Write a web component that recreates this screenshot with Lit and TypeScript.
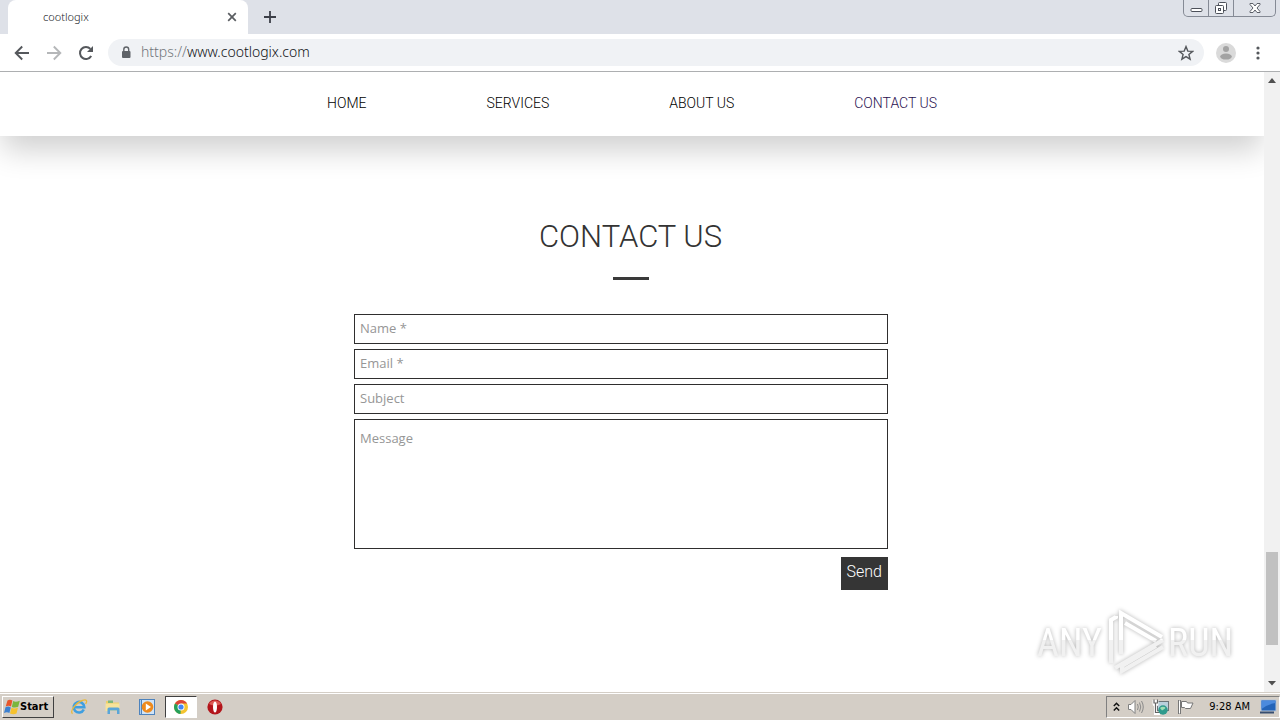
import { LitElement, html, css, svg } from "lit";
import { customElement } from "lit/decorators.js";

const icon = (w: number, h: number, body: unknown) =>
  html`<svg width=${w} height=${h} viewBox="0 0 ${w} ${h}" aria-hidden="true">${body}</svg>`;

const ICONS = {
  close: icon(10, 10, svg`<path d="M1.2 1.2 8.8 8.8M8.8 1.2 1.2 8.8" stroke="#5a5d61" stroke-width="1.7"/>`),
  plus: icon(12, 12, svg`<path d="M6 0V12M0 6H12" stroke="#3c3f48" stroke-width="1.8"/>`),
  back: icon(16, 16, svg`<path d="M15 8H2M8.2 1.5 1.7 8l6.5 6.5" fill="none" stroke="#55585c" stroke-width="1.9"/>`),
  forward: icon(16, 16, svg`<path d="M1 8H14M7.8 1.5 14.3 8l-6.5 6.5" fill="none" stroke="#b5b7b9" stroke-width="1.9"/>`),
  reload: icon(16, 16, svg`<path d="M13.2 11A6 6 0 1 1 12.4 3.9" fill="none" stroke="#55585c" stroke-width="2"/><path d="M15 1V7H9Z" fill="#55585c"/>`),
  lock: icon(10, 13, svg`<rect x="1" y="5" width="8.5" height="7" rx="1" fill="#5f6368"/><path d="M2.8 5.5V3.5a2.4 2.4 0 0 1 4.9 0v2" fill="none" stroke="#5f6368" stroke-width="1.4"/>`),
  star: icon(16, 16, svg`<path d="M8 1.6 9.8 6.1 14.6 6.4 10.9 9.5 12.1 14.2 8 11.6 3.9 14.2 5.1 9.5 1.4 6.4 6.2 6.1Z" fill="none" stroke="#55585c" stroke-width="1.4"/>`),
  person: icon(20, 20, svg`<circle cx="10" cy="10" r="10" fill="#dadada"/><circle cx="10" cy="6" r="3" fill="#a3a3a3"/><ellipse cx="10" cy="13.6" rx="5.8" ry="3" fill="#a3a3a3"/>`),
  dots: icon(4, 14, svg`<g fill="#55585c"><circle cx="2" cy="2" r="1.6"/><circle cx="2" cy="7" r="1.6"/><circle cx="2" cy="12" r="1.6"/></g>`),
  minimize: icon(13, 6, svg`<rect x="1" y="1.5" width="11" height="3" rx="1" fill="#fff" stroke="#4c5059"/>`),
  restore: icon(14, 14, svg`<g fill="#fff" stroke="#4c5059"><rect x="4.5" y="1.5" width="8" height="8" rx="1"/><rect x="1.5" y="4.5" width="8" height="8" rx="1"/><rect x="4.5" y="7.5" width="2" height="2"/></g>`),
  windowClose: icon(12, 12, svg`<path d="M1 1.5H4L6 4 8 1.5H11V2.5L8 6l3 3.5v1H8L6 8 4 10.5H1v-1L4 6 1 2.5Z" fill="#fff" stroke="#5b5f68"/>`),
  up: icon(8, 5, svg`<path d="M0 5 4 0 8 5Z" fill="#505050"/>`),
  down: icon(8, 5, svg`<path d="M0 0H8L4 4.5Z" fill="#505050"/>`),
  windows: icon(16, 16, svg`<path d="M3.5 1.5Q5.8 0 8.4 1.5L7 7.5Q4.5 6 1.7 7.5Z" fill="#e8562a"/><path d="M9.2 2Q11.5 3.5 15.8 1.7L14.2 7.8Q11 9.2 7.8 7.9Z" fill="#7ab63c"/><path d="M1.5 8.3Q4.2 6.9 6.8 8.4L5.4 14Q3 12.5 0 14Z" fill="#3c80d0"/><path d="M7.5 8.8Q10.5 10.2 14 8.6L12.5 14.4Q9.5 16 6 14.4Z" fill="#f6c22e"/>`),
  ie: icon(18, 18, svg`<path d="M13.8 11.5A5.3 5.3 0 1 1 14.3 9.2H5" fill="none" stroke="#3f9fe0" stroke-width="2.6"/><path d="M2.5 15.8C-.5 13 6 4.5 12.5 2.3 17 1 17.5 3 15.6 6" fill="none" stroke="#e9b93c" stroke-width="1.3"/>`),
  folder: icon(18, 18, svg`<path d="M2 3H7L8.5 4.5H15V13H2Z" fill="#edcf6b"/><path d="M4 2.5H9V5H4Z" fill="#7fb77a"/><path d="M1.5 5.5H15.5V13H1.5Z" fill="#f7e39b"/><path d="M3.5 16V11Q3.5 9.5 5 9.5H14Q15.5 9.5 15.5 11V16H13V12.5H6V16Z" fill="#5ba6d8"/>`),
  player: icon(18, 18, svg`<rect x="1.5" y="1.5" width="12" height="15" fill="#a9cdf0" stroke="#4d83bd"/><rect x="3.5" y="1.5" width="13" height="15" fill="#cfe3f7" stroke="#4d83bd"/><circle cx="9.5" cy="9" r="5.8" fill="#ee8a1d"/><path d="M7.8 5.5 13 9 7.8 12.5Z" fill="#fff"/>`),
  chrome: icon(16, 16, svg`<circle cx="8" cy="8" r="7" fill="#f4c430"/><path d="M8 8 1.94 4.5A7 7 0 0 1 14.06 4.5Z" fill="#dc4437"/><path d="M8 8 1.94 4.5A7 7 0 0 0 7.5 15Z" fill="#26a05b"/><path d="M8 4.5H14.06L11 9.7Z" fill="#f4c430"/><circle cx="8" cy="8" r="3.5" fill="#fff"/><circle cx="8" cy="8" r="2.6" fill="#4285f4"/>`),
  opera: icon(16, 16, svg`<circle cx="8" cy="8" r="7.6" fill="#b3151b"/><path d="M2 5A7 7 0 0 1 14 5Q8 8 2 5Z" fill="#dd5a55"/><ellipse cx="8" cy="8" rx="2" ry="5.5" fill="#fff"/>`),
  chevrons: icon(7, 10, svg`<path d="M.8 4 3.5 1.3 6.2 4M.8 8.5 3.5 5.8 6.2 8.5" fill="none" stroke="#111" stroke-width="1.5"/>`),
  speaker: icon(18, 16, svg`<path d="M1.5 5.5H4L8 1.5V14.5L4 10.5H1.5Z" fill="#fff" stroke="#808080"/><path d="M10.5 5Q12 8 10.5 11M12.5 3.5Q15 8 12.5 12.5M14.5 2Q18 8 14.5 14" fill="none" stroke="#8a8a8a"/>`),
  network: icon(18, 18, svg`<rect x="5.5" y="3.5" width="11" height="9" fill="#b9d0dc" stroke="#6c7478"/><path d="M2 2V5Q2 7 3.5 7T5 5V2M3.5 7V15.5H8" fill="none" stroke="#fff" stroke-width="3"/><path d="M2 1.5V5H5.5V1.5M3.5 5V14.5H8" fill="none" stroke="#666" stroke-width="1.2"/><circle cx="11" cy="12" r="4.7" fill="#2f9b8d"/><path d="M8 10Q10 8 12.5 9T10 12.5Z" fill="#9fddb2"/>`),
  flag: icon(18, 16, svg`<path d="M2.5 1V15" stroke="#777" stroke-width="3"/><path d="M2.5 1.5V14.5" stroke="#fff"/><path d="M4.5 2.5H9.5L10.5 4H16L13.5 9.5H8.5L7.5 8.5H4.5Z" fill="#fff" stroke="#777"/>`),
  desktop: icon(18, 16, svg`<rect x="2" y="1" width="15" height="11" fill="#2464b8" stroke="#b7c6d8"/><path d="M2.5 1.5H16.5V4Q9 5 2.5 10Z" fill="#4b8add"/><path d="M1 13.5H15" stroke="#374e70" stroke-width="2"/>`),
};

@customElement("title-bar")
export class TitleBar extends LitElement {
  static styles = css`
    :host { display: flex; height: 34px; background: #dee1e8; }
    button { border: 0; background: none; padding: 0; display: grid; place-items: center; }
    .tab { display: flex; align-items: center; justify-content: space-between; width: 240px; margin-left: 8px;
      box-sizing: border-box; padding: 0 11px 0 35px; background: #fff; border-radius: 8px 8px 0 0; color: #202328;
      font: 300 11px/16px "Noto Sans", sans-serif; }
    .new { width: 28px; margin-left: 8px; }
    .window { display: flex; margin: 0 4px 0 auto; height: 17px; box-sizing: border-box;
      border: 1px solid #858a95; border-top: 0; border-radius: 0 0 5px 5px; }
    .window button { width: 25px; border-right: 1px solid #858a95; }
    .window button:first-child { align-items: end; padding-bottom: 3px; }
    .window button:last-child { width: 41px; border: 0; }
  `;
  render() {
    return html`
      <div class="tab"><span>cootlogix</span><button aria-label="Close tab">${ICONS.close}</button></div>
      <button class="new" aria-label="New tab">${ICONS.plus}</button>
      <div class="window">
        <button aria-label="Minimize">${ICONS.minimize}</button>
        <button aria-label="Restore">${ICONS.restore}</button>
        <button aria-label="Close">${ICONS.windowClose}</button>
      </div>`;
  }
}

@customElement("tool-bar")
export class ToolBar extends LitElement {
  static styles = css`
    :host { display: flex; align-items: center; height: 38px; box-sizing: border-box; padding: 0 14px;
      background: #fff; border-bottom: 1px solid #adafb1; }
    button { border: 0; background: none; padding: 0; display: grid; place-items: center; }
    .nav { display: flex; gap: 16px; }
    .address { display: flex; align-items: center; flex: 1; height: 27px; margin: 0 12px 0 14px; box-sizing: border-box;
      padding: 0 10px 0 13px; border-radius: 14px; background: #f0f2f5; font: 300 14px/20px "Noto Sans", sans-serif; color: #101216; }
    .url { flex: 1; margin-left: 10px; padding-bottom: 2px; }
    .scheme { color: #70757a; }
    .menu { margin: 0 6px 0 20px; }
  `;
  render() {
    return html`
      <div class="nav">
        <button aria-label="Back">${ICONS.back}</button>
        <button aria-label="Forward">${ICONS.forward}</button>
        <button aria-label="Reload">${ICONS.reload}</button>
      </div>
      <div class="address">
        ${ICONS.lock}<span class="url"><span class="scheme">https://</span>www.cootlogix.com</span>
        <button aria-label="Bookmark">${ICONS.star}</button>
      </div>
      <button aria-label="Profile">${ICONS.person}</button>
      <button class="menu" aria-label="Menu">${ICONS.dots}</button>`;
  }
}

@customElement("contact-page")
export class ContactPage extends LitElement {
  static styles = css`
    :host { display: block; overflow: hidden; background: #fff; font-family: Roboto, sans-serif; }
    nav { display: flex; justify-content: center; gap: 120px; height: 64px; align-items: center; box-sizing: border-box;
      padding-bottom: 2px; box-shadow: 0 16px 30px -2px rgba(0, 0, 0, 0.19); }
    a { color: #000; text-decoration: none; font-size: 14px; line-height: 20px; font-weight: 300; }
    .current { color: #2a1050; }
    .contact { max-width: 556px; margin: 0 auto; padding-top: 80px; }
    header { padding-right: 3px; }
    h1 { margin: 0; font-size: 31px; line-height: 42px; font-weight: 300; color: #333; text-align: center; }
    .rule { width: 36px; height: 3px; margin: 19px auto 34px; background: #3a3a3a; }
    form { display: flex; flex-direction: column; gap: 5px; padding-right: 22px; }
    input, textarea { display: block; width: 100%; box-sizing: border-box; margin: 0; border: 1px solid #2f2e2e; border-radius: 0;
      background: #fff; padding: 0 5px 2px; height: 30px; font: 400 13px/18px "Open Sans", sans-serif; color: #2f2e2e; outline: 0; }
    textarea { height: 130px; padding: 9px 5px; resize: none; }
    ::placeholder { color: #969696; opacity: 1; }
    .send { align-self: flex-end; margin-top: 3px; height: 33px; padding: 0 6px 3px; border: 0; background: #353535;
      color: #fff; font: 300 16px/20px Roboto, sans-serif; }
  `;
  render() {
    return html`
      <nav>
        <a href="#home">HOME</a><a href="#services">SERVICES</a><a href="#about">ABOUT US</a><a class="current" href="#contact">CONTACT US</a>
      </nav>
      <section class="contact">
        <header><h1>CONTACT US</h1><div class="rule"></div></header>
        <form>
          <input aria-label="Name" placeholder="Name *" />
          <input aria-label="Email" type="email" placeholder="Email *" />
          <input aria-label="Subject" placeholder="Subject" />
          <textarea aria-label="Message" placeholder="Message"></textarea>
          <button class="send" type="button">Send</button>
        </form>
      </section>`;
  }
}

@customElement("scroll-bar")
export class ScrollBar extends LitElement {
  static styles = css`
    :host { display: flex; flex-direction: column; width: 16px; background: #f1f1f1; }
    button { height: 17px; border: 0; padding: 0; background: none; display: grid; place-items: center; }
    .track { flex: 1; display: grid; grid-template-rows: 463fr 93fr 30fr; padding: 0 2px; }
    .thumb { grid-row: 2; background: #c1c1c1; }
  `;
  render() {
    return html`
      <button aria-label="Scroll up">${ICONS.up}</button>
      <div class="track"><div class="thumb"></div></div>
      <button aria-label="Scroll down">${ICONS.down}</button>`;
  }
}

@customElement("run-watermark")
export class RunWatermark extends LitElement {
  static styles = css`
    :host { display: block; }
    svg { display: block; filter: drop-shadow(0 0 2px rgba(0, 0, 0, 0.3)); }
    .word { font: 400 38px "Roboto Condensed", "Open Sans Condensed", sans-serif; }
  `;
  render() {
    return html`<svg width="206" height="70" viewBox="0 0 206 70" role="img" aria-label="ANY RUN">
      <defs><linearGradient id="fade" gradientUnits="userSpaceOnUse" x1="0" y1="0" x2="0" y2="70">
        <stop offset=".48" stop-color="#fff"/><stop offset=".48" stop-color="#f1f1f1"/></linearGradient></defs>
      <g fill="url(#fade)">
        <text class="word" x="5" y="50">ANY</text>
        <text class="word" x="136" y="50">RUN</text>
      </g>
      <g fill="none" stroke="url(#fade)" stroke-width="4">
        <path d="M84 10V11L79 14V57"/>
        <path d="M89 48V7L130 31"/>
        <path d="M93 17 124 35"/>
        <path d="M131 34 83 62"/>
        <path d="M131 41 90 65V60L124 40"/>
      </g>
    </svg>`;
  }
}

@customElement("task-bar")
export class TaskBar extends LitElement {
  static styles = css`
    :host { display: flex; align-items: center; height: 28px; box-sizing: border-box; padding: 1px 0 0 2px; background: #d4cec6;
      border-top: 1px solid #d4cec6; box-shadow: inset 0 1px #fff; font: 11px/14px "DejaVu Sans Condensed", sans-serif; color: #000; }
    button { border: 0; background: none; padding: 0; display: grid; place-items: center; }
    .start { display: flex; align-items: center; height: 22px; width: 52px; box-sizing: border-box; padding: 0 1px;
      border: 1px solid; border-color: #fff #404040 #404040 #fff; font: 700 11px/14px "DejaVu Sans Condensed", sans-serif; color: #000; }
    .apps { display: flex; align-items: center; margin-left: 8px; }
    .apps button { width: 34px; height: 22px; }
    .apps .active { width: 32px; box-sizing: border-box; background: #fff; border: 1px solid; border-color: #404040 #fff #fff #404040; margin: 0 1px; }
    .tray { display: flex; align-items: center; gap: 7px; height: 22px; margin-left: auto; box-sizing: border-box; padding: 0 2px 0 6px;
      border: 1px solid; border-color: #808080 #fff #fff #808080; }
    .clock { margin: 0 2px 0 7px; }
  `;
  render() {
    return html`
      <button class="start">${ICONS.windows}<span>Start</span></button>
      <div class="apps">
        <button aria-label="Internet Explorer">${ICONS.ie}</button>
        <button aria-label="Explorer">${ICONS.folder}</button>
        <button aria-label="Media Player">${ICONS.player}</button>
        <button class="active" aria-label="Chrome">${ICONS.chrome}</button>
        <button aria-label="Opera">${ICONS.opera}</button>
      </div>
      <div class="tray">
        ${ICONS.chevrons}${ICONS.speaker}${ICONS.network}${ICONS.flag}
        <span class="clock">9:28 AM</span>${ICONS.desktop}
      </div>`;
  }
}

@customElement("app-root")
export class AppRoot extends LitElement {
  static styles = css`
    :host { display: flex; flex-direction: column; min-height: 100vh; position: relative; background: #fff; }
    .view { flex: 1; display: grid; grid-template-columns: 1fr 16px; }
    .mark { position: absolute; right: 42px; bottom: 44px; }
  `;
  render() {
    return html`
      <title-bar></title-bar>
      <tool-bar></tool-bar>
      <div class="view"><contact-page></contact-page><scroll-bar></scroll-bar></div>
      <task-bar></task-bar>
      <run-watermark class="mark"></run-watermark>`;
  }
}
